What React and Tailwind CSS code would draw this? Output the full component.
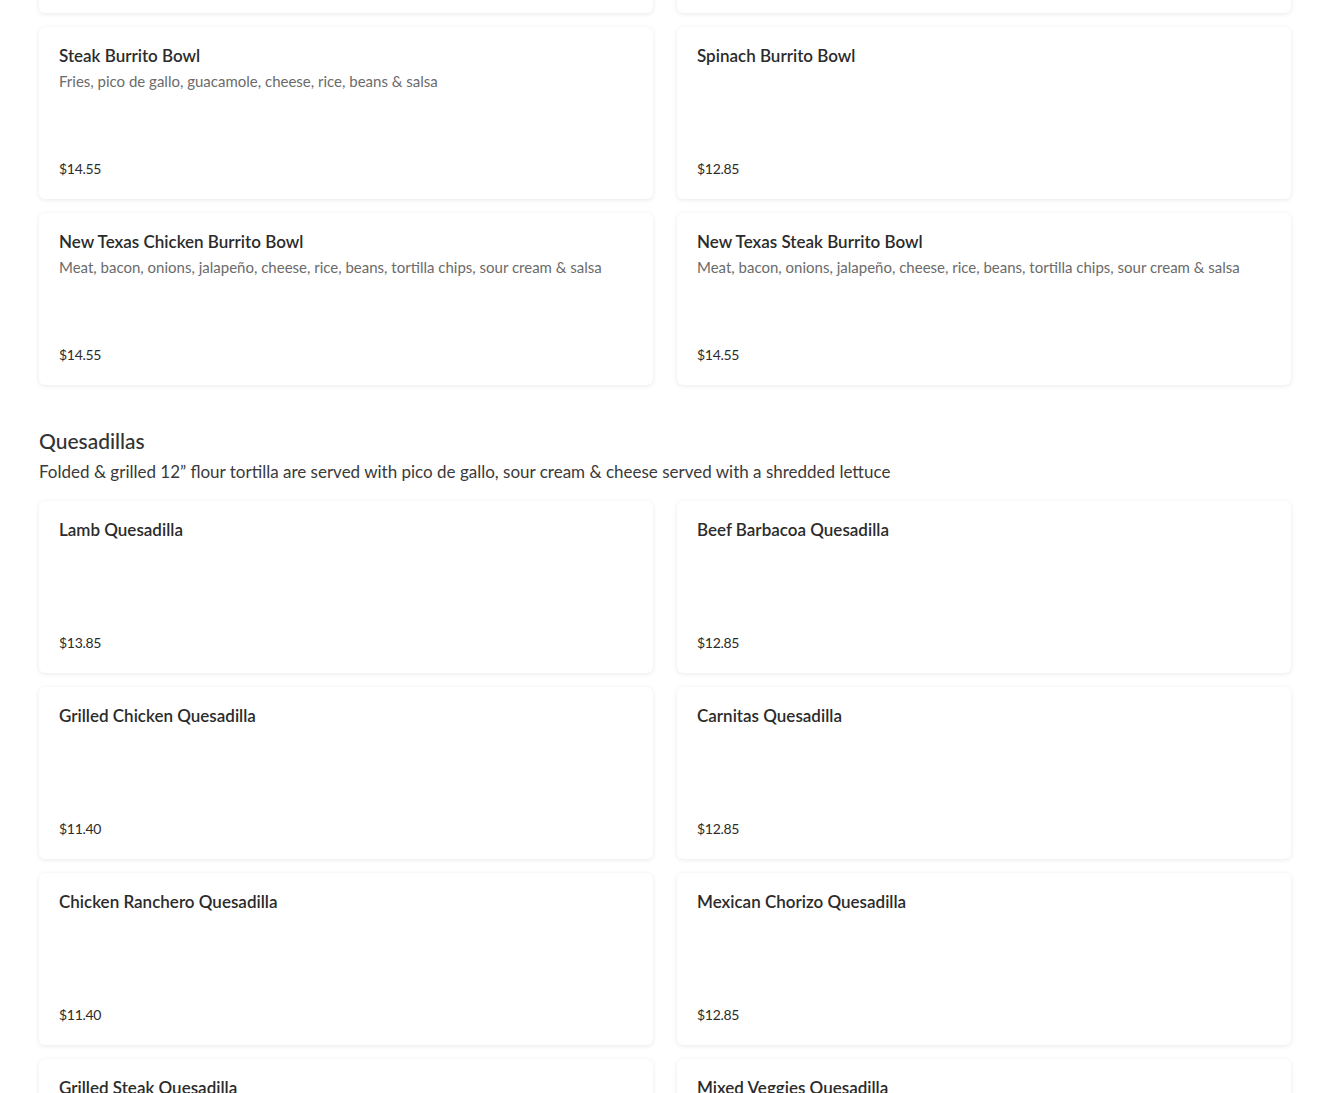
import React from "react";

const bowls = [
	{ name: "", desc: "", price: "" },
	{ name: "", desc: "", price: "" },
	{ name: "Steak Burrito Bowl", desc: "Fries, pico de gallo, guacamole, cheese, rice, beans & salsa", price: "$14.55" },
	{ name: "Spinach Burrito Bowl", desc: "", price: "$12.85" },
	{ name: "New Texas Chicken Burrito Bowl", desc: "Meat, bacon, onions, jalapeño, cheese, rice, beans, tortilla chips, sour cream & salsa", price: "$14.55" },
	{ name: "New Texas Steak Burrito Bowl", desc: "Meat, bacon, onions, jalapeño, cheese, rice, beans, tortilla chips, sour cream & salsa", price: "$14.55" },
];

const quesadillas = [
	{ name: "Lamb Quesadilla", desc: "", price: "$13.85" },
	{ name: "Beef Barbacoa Quesadilla", desc: "", price: "$12.85" },
	{ name: "Grilled Chicken Quesadilla", desc: "", price: "$11.40" },
	{ name: "Carnitas Quesadilla", desc: "", price: "$12.85" },
	{ name: "Chicken Ranchero Quesadilla", desc: "", price: "$11.40" },
	{ name: "Mexican Chorizo Quesadilla", desc: "", price: "$12.85" },
	{ name: "Grilled Steak Quesadilla", desc: "", price: "$13.85" },
	{ name: "Mixed Veggies Quesadilla", desc: "", price: "$11.40" },
];

function ItemCard({ item }) {
	return (
		<div className="flex h-[172px] flex-col rounded-md bg-white px-5 pt-[17px] pb-5 shadow-[0_1px_5px_rgba(0,0,0,0.09)]">
			{item.name && (
				<h3 className="text-[17px] leading-6 font-semibold text-[#2b2b2b]">{item.name}</h3>
			)}
			{item.desc && (
				<p className="mt-[3px] text-[15px] leading-5 text-[#6b6b6b]">{item.desc}</p>
			)}
			{item.price && (
				<p className="mt-auto text-[14px] leading-5 tracking-[-0.3px] text-[#2b2b2b]">{item.price}</p>
			)}
		</div>
	);
}

export default function App() {
	return (
		<div className="h-[1093px] overflow-hidden bg-white font-['Lato',sans-serif]">
			<div className="mt-[-159px] px-[39px]">
				<div className="grid grid-cols-2 gap-x-6 gap-y-[14px]">
					{bowls.map((b, i) => (
						<ItemCard key={i} item={b} />
					))}
				</div>

				<section className="mt-[42px]">
					<h2 className="text-[21px] leading-7 font-medium text-[#333333]">Quesadillas</h2>
					<p className="mt-[5px] text-[17px] leading-6 text-[#3a3a3a]">
						Folded & grilled 12” flour tortilla are served with pico de gallo, sour cream & cheese served with a shredded lettuce
					</p>
					<div className="mt-[17px] grid grid-cols-2 gap-x-6 gap-y-[14px]">
						{quesadillas.map((q) => (
							<ItemCard key={q.name} item={q} />
						))}
					</div>
				</section>
			</div>
		</div>
	);
}
